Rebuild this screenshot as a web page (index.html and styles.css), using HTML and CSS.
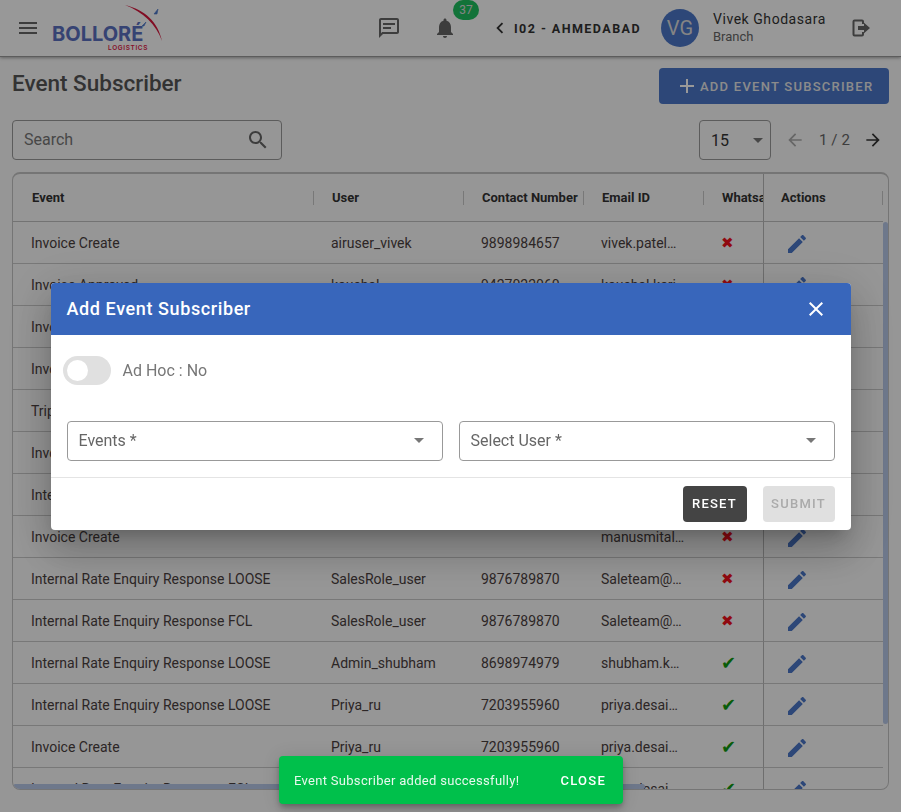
FILE: index.html
```html
<!DOCTYPE html>
<html lang="en">
<head>
	<title>Event Subscriber</title>
	<link rel="stylesheet" href="styles.css">
</head>
<body>

<header class="topbar">
	<svg class="icon menu-icon" viewBox="0 0 24 24"><path d="M3 18h18v-2H3v2zm0-5h18v-2H3v2zm0-7v2h18V6H3z"/></svg>
	<div class="logo">
		<span class="logo-name">BOLLORÉ</span>
		<span class="logo-sub">LOGISTICS</span>
		<svg class="logo-arc" width="60" height="50" viewBox="0 0 60 50">
			<path d="M15 5C35 10 48 22 52 41C46 24 33 12 15 5z" fill="#d8163c"/>
			<path d="M44 14L48 9L47 14z M32 26L36 22L34 26z" fill="#4b77c8" stroke="#4b77c8" stroke-width=".6"/>
		</svg>
	</div>
	<div class="topbar-right">
		<svg class="icon chat-icon" viewBox="0 0 24 24"><path d="M4 4h16v12H5.17L4 17.17V4m0-2c-1.1 0-1.99.9-1.99 2L2 22l4-4h14c1.1 0 2-.9 2-2V4c0-1.1-.9-2-2-2H4zm2 9h8v2H6v-2zm0-4h12v2H6V7z"/></svg>
		<div class="bell">
			<svg class="icon" viewBox="0 0 24 24"><path d="M12 22c1.1 0 2-.9 2-2h-4c0 1.1.89 2 2 2zm6-6v-5c0-3.07-1.64-5.64-4.5-6.32V4c0-.83-.67-1.5-1.5-1.5s-1.5.67-1.5 1.5v.68C7.63 5.36 6 7.92 6 11v5l-2 2v1h16v-1l-2-2z"/></svg>
			<span class="badge">37</span>
		</div>
		<div class="branch">
			<svg class="icon chevron" viewBox="0 0 24 24"><path d="M15.41 7.41L14 6l-6 6 6 6 1.41-1.41L10.83 12z"/></svg>
			<span>I02 - AHMEDABAD</span>
		</div>
		<div class="avatar">VG</div>
		<div class="who">
			<div class="who-name">Vivek Ghodasara</div>
			<div class="who-role">Branch</div>
		</div>
		<svg class="logout-icon" viewBox="0 0 20 20" width="20" height="20">
			<path d="M11 2.5H3.5a1 1 0 0 0-1 1v13a1 1 0 0 0 1 1H11a1 1 0 0 0 1-1v-2.5M12 6V3.5a1 1 0 0 0-1-1" fill="none" stroke="#666" stroke-width="2"/>
			<path d="M7 8h6V4.8l6 5.2-6 5.2V12H7z" fill="#666"/>
		</svg>
	</div>
</header>

<main class="content">
	<div class="title-row">
		<h1>Event Subscriber</h1>
		<button class="add-btn">
			<svg class="icon" viewBox="0 0 24 24"><path d="M19 13h-6v6h-2v-6H5v-2h6V5h2v6h6v2z"/></svg>
			ADD EVENT SUBSCRIBER
		</button>
	</div>

	<div class="tools-row">
		<div class="search">
			<span>Search</span>
			<svg class="icon" viewBox="0 0 24 24"><path d="M15.5 14h-.79l-.28-.27C15.41 12.59 16 11.11 16 9.5 16 5.91 13.09 3 9.5 3S3 5.91 3 9.5 5.91 16 9.5 16c1.61 0 3.09-.59 4.23-1.57l.27.28v.79l5 4.99L20.49 19l-4.99-5zm-6 0C7.01 14 5 11.99 5 9.5S7.01 5 9.5 5 14 7.01 14 9.5 11.99 14 9.5 14z"/></svg>
		</div>
		<div class="pager">
			<div class="page-size"><span>15</span><i class="caret"></i></div>
			<svg class="icon arrow off" viewBox="0 0 24 24"><path d="M20 11H7.83l5.59-5.59L12 4l-8 8 8 8 1.41-1.41L7.83 13H20v-2z"/></svg>
			<span class="page-num">1 / 2</span>
			<svg class="icon arrow" viewBox="0 0 24 24"><path d="M12 4l-1.41 1.41L16.17 11H4v2h12.17l-5.58 5.59L12 20l8-8z"/></svg>
		</div>
	</div>

	<div class="table-box">
		<table class="grid">
			<colgroup>
				<col class="c-event"><col class="c-user"><col class="c-num"><col class="c-mail"><col class="c-wa"><col class="c-act">
			</colgroup>
			<thead>
				<tr>
					<th><span>Event</span></th>
					<th><span>User</span></th>
					<th class="tight"><span>Contact Number</span></th>
					<th><span>Email ID</span></th>
					<th class="clip"><span>Whatsapp</span></th>
					<th class="act"><span>Actions</span></th>
				</tr>
			</thead>
			<tbody id="rows"></tbody>
		</table>
		<div class="thumb-v"></div>
		<div class="thumb-h"></div>
	</div>
</main>

<div class="overlay">
	<div class="modal">
		<div class="modal-head">
			<h2>Add Event Subscriber</h2>
			<svg class="icon" viewBox="0 0 24 24"><path d="M19 6.41L17.59 5 12 10.59 6.41 5 5 6.41 10.59 12 5 17.59 6.41 19 12 13.41 17.59 19 19 17.59 13.41 12z"/></svg>
		</div>
		<div class="modal-body">
			<div class="adhoc">
				<div class="toggle"><i></i></div>
				<span>Ad Hoc : No</span>
			</div>
			<div class="fields">
				<div class="field"><span>Events *</span><i class="caret"></i></div>
				<div class="field"><span>Select User *</span><i class="caret"></i></div>
			</div>
		</div>
		<div class="modal-foot">
			<button class="btn-reset">RESET</button>
			<button class="btn-submit">SUBMIT</button>
		</div>
	</div>
</div>

<div class="snack">
	<span>Event Subscriber added successfully!</span>
	<b>CLOSE</b>
</div>

<script>
var data = [
	["Invoice Create", "airuser_vivek", "9898984657", "vivek.patel@bollore.com", 0],
	["Invoice Approved", "kaushal", "9427022060", "kaushal.karia@bollore.com", 0],
	["Invoice Create", "kaushal", "9427022060", "kaushal.karia@bollore.com", 0],
	["Invoice Approved", "kaushal", "9427022060", "kaushal.karia@bollore.com", 0],
	["Trip Create", "kaushal", "9427022060", "kaushal.karia@bollore.com", 0],
	["Invoice Create", "kaushal", "9427022060", "kaushal.karia@bollore.com", 0],
	["Internal Rate Enquiry", "kaushal", "9427022060", "kaushal.karia@bollore.com", 0],
	["Invoice Create", "", "", "manusmital@bollore.com", 0],
	["Internal Rate Enquiry Response LOOSE", "SalesRole_user", "9876789870", "Saleteam@bollore.com", 0],
	["Internal Rate Enquiry Response FCL", "SalesRole_user", "9876789870", "Saleteam@bollore.com", 0],
	["Internal Rate Enquiry Response LOOSE", "Admin_shubham", "8698974979", "shubham.kumar@bollore.com", 1],
	["Internal Rate Enquiry Response LOOSE", "Priya_ru", "7203955960", "priya.desai@bollore.com", 1],
	["Invoice Create", "Priya_ru", "7203955960", "priya.desai@bollore.com", 1],
	["Internal Rate Enquiry Response FCL", "Priya_ru", "7203955960", "priya.desai@bollore.com", 1]
];

var pencil = '<svg class="icon edit" viewBox="0 0 24 24"><path d="M3 17.25V21h3.75L17.81 9.94l-3.75-3.75L3 17.25zM20.71 7.04c.39-.39.39-1.02 0-1.41l-2.34-2.34c-.39-.39-1.02-.39-1.41 0l-1.83 1.83 3.75 3.75 1.83-1.83z"/></svg>';

document.getElementById("rows").innerHTML = data.map(function(r) {
	var mark = r[4] ? '<span class="yes">✔</span>' : '<span class="no">✖</span>';
	return "<tr><td>" + r[0] + "</td><td>" + r[1] + "</td><td>" + r[2] + "</td><td>" + r[3] + "</td><td>" + mark + '</td><td class="act">' + pencil + "</td></tr>";
}).join("");
</script>

</body>
</html>
```

FILE: styles.css
```css
* {
	box-sizing: border-box;
}

html, body {
	margin: 0;
	height: 812px;
	overflow: hidden;
}

body {
	font-family: Roboto, sans-serif;
	background: #fafafa;
	color: #444;
}

.icon {
	width: 24px;
	height: 24px;
	fill: #666;
	flex: none;
}

/* top bar */
.topbar {
	height: 57px;
	display: flex;
	align-items: center;
	background: #fdfdfd;
	border-bottom: 1px solid #999;
	box-shadow: 0 1px 3px rgba(0,0,0,.35);
	padding-left: 16px;
}

.menu-icon {
	margin-right: 12px;
}

.logo {
	position: relative;
	width: 112px;
	height: 57px;
	display: flex;
	flex-direction: column;
	align-items: flex-start;
	padding-top: 23px;
}

.logo-name {
	font-family: Inter, sans-serif;
	font-weight: 700;
	font-size: 20px;
	line-height: 22px;
	color: #5a70c0;
	width: 96px;
}

.logo-sub {
	font-family: Inter, sans-serif;
	font-weight: 600;
	font-size: 6.5px;
	line-height: 7px;
	letter-spacing: .6px;
	color: #e01a45;
	width: 96px;
	text-align: right;
}

.logo-arc {
	position: absolute;
	left: 58px;
	top: 0;
}

.topbar-right {
	display: flex;
	align-items: center;
	margin-left: 213px;
}

.bell {
	position: relative;
	margin-left: 32px;
	height: 24px;
}

.badge {
	position: absolute;
	left: 20px;
	top: -16px;
	width: 26px;
	height: 20px;
	border-radius: 10px;
	background: #1fc060;
	color: #ddd;
	font-size: 12px;
	line-height: 20px;
	text-align: center;
}

.branch {
	display: flex;
	align-items: center;
	margin-left: 37px;
	font-size: 12.5px;
	font-weight: 700;
	letter-spacing: 1.45px;
	color: #333;
}

.chevron {
	width: 22px;
	height: 24px;
	fill: #333;
	margin-right: 3px;
	margin-left: -5px;
}

.avatar {
	width: 38px;
	height: 38px;
	border-radius: 50%;
	background: #4b77c8;
	color: #ddd;
	font-size: 20px;
	line-height: 38px;
	text-align: center;
	margin-left: 20px;
}

.who {
	margin-left: 14px;
	width: 139px;
}

.who-name {
	font-size: 14px;
	line-height: 18px;
	letter-spacing: .55px;
	color: #333;
}

.who-role {
	font-size: 13px;
	line-height: 18px;
	color: #666;
}

.logout-icon {
	margin-left: -1px;
}

/* page */
.content {
	padding: 11px 12px 0;
}

.title-row {
	display: flex;
	justify-content: space-between;
	align-items: flex-start;
}

h1 {
	margin: -1px 0 0;
	font-size: 22.5px;
	line-height: 32px;
	font-weight: 500;
	color: #555;
}

.add-btn {
	display: flex;
	align-items: center;
	width: 230px;
	height: 36px;
	padding: 0 0 0 16px;
	border: 0;
	border-radius: 4px;
	background: #4b77c8;
	font-family: Roboto, sans-serif;
	font-size: 13px;
	font-weight: 500;
	letter-spacing: 1.25px;
	color: #e8e8e8;
}

.add-btn .icon {
	fill: #fff;
	margin-right: 1px;
	width: 24px;
}

.tools-row {
	display: flex;
	justify-content: space-between;
	margin-top: 16px;
}

.search {
	display: flex;
	justify-content: space-between;
	align-items: center;
	width: 270px;
	height: 40px;
	padding: 0 11px;
	border: 1px solid #999;
	border-radius: 4px;
	font-size: 16px;
	color: #777;
}

.search span {
	margin-top: -2px;
}

.pager {
	display: flex;
	align-items: center;
	width: 190px;
}

.page-size {
	display: flex;
	justify-content: space-between;
	align-items: center;
	width: 72px;
	height: 40px;
	padding: 0 7px 0 11px;
	border: 1px solid #999;
	border-radius: 4px;
	font-size: 16px;
	color: #333;
}

.caret {
	width: 0;
	height: 0;
	border-left: 5px solid transparent;
	border-right: 5px solid transparent;
	border-top: 5px solid #777;
}

.arrow {
	width: 20px;
	height: 20px;
	fill: #333;
	margin-left: 14px;
}

.arrow.off {
	fill: #aaa;
}

.page-num {
	margin-left: 14px;
	font-size: 15px;
	letter-spacing: .1px;
	color: #666;
	width: 30px;
	white-space: nowrap;
}

/* table */
.table-box {
	position: relative;
	margin-top: 12px;
	height: 618px;
	width: 877px;
	overflow: hidden;
	border: 1px solid #c4c4c4;
	border-top: 2px solid #c4c4c4;
	border-radius: 8px;
}

.grid {
	table-layout: fixed;
	width: 870px;
	border-collapse: separate;
	border-spacing: 0;
	font-size: 14px;
}

.c-event { width: 300px; }
.c-user { width: 150px; }
.c-num { width: 120px; }
.c-mail { width: 120px; }
.c-wa { width: 60px; }
.c-act { width: 120px; }

.grid th {
	height: 48px;
	padding: 0 0 0 19px;
	text-align: left;
	font-size: 13px;
	font-weight: 700;
	color: #333;
	white-space: nowrap;
	border-bottom: 1px solid #c0c0c0;
	background-image: linear-gradient(#c8c8c8, #c8c8c8);
	background-repeat: no-repeat;
	background-size: 1px 14px;
	background-position: left center;
}

.grid th:first-child {
	background-image: none;
}

.grid th.clip {
	overflow: hidden;
}

.grid td {
	height: 42px;
	padding: 0 17px 0 18px;
	white-space: nowrap;
	overflow: hidden;
	text-overflow: ellipsis;
	border-bottom: 1px solid #c8c8c8;
	color: #4a4040;
}

.grid .act {
	border-left: 1px solid #b8b8b8;
}

.grid th.act {
	padding-left: 17px;
	background-position: right center;
}

.grid td.act {
	padding: 2px 0 0 21px;
	text-overflow: clip;
}

.edit {
	display: block;
	fill: #4b77c8;
}

.no {
	font-family: "DejaVu Sans", sans-serif;
	font-size: 15px;
	color: #f0101c;
}

.yes {
	font-family: "DejaVu Sans", sans-serif;
	font-size: 18px;
	color: #0f9a0f;
}

.thumb-v {
	position: absolute;
	left: 870px;
	top: 48px;
	width: 5px;
	height: 502px;
	background: #b8c8e8;
	border-radius: 3px;
}

.thumb-h {
	position: absolute;
	left: 0;
	bottom: 0;
	width: 632px;
	height: 5px;
	background: #b8c8e8;
	border-radius: 3px;
}

/* dialog */
.overlay {
	position: fixed;
	left: 0;
	top: 0;
	width: 901px;
	height: 812px;
	display: flex;
	justify-content: center;
	align-items: center;
	background: rgba(0,0,0,.4);
}

.modal {
	width: 800px;
	height: 247px;
	display: flex;
	flex-direction: column;
	background: #fff;
	border-radius: 4px;
	overflow: hidden;
	box-shadow: 0 11px 15px -7px rgba(0,0,0,.2), 0 24px 38px 3px rgba(0,0,0,.14), 0 9px 46px 8px rgba(0,0,0,.12);
}

.modal-head {
	height: 52px;
	display: flex;
	justify-content: space-between;
	align-items: center;
	padding: 0 23px 0 16px;
	background: #3866bb;
}

.modal-head h2 {
	margin: 0;
	font-size: 18px;
	font-weight: 500;
	letter-spacing: .6px;
	color: #fff;
}

.modal-head .icon {
	fill: #fff;
}

.modal-body {
	flex: 1;
	padding: 21px 16px 0;
	border-bottom: 1px solid #e4e4e4;
}

.adhoc {
	display: flex;
	align-items: center;
	margin-left: -4px;
	font-size: 16px;
	color: #777;
}

.toggle {
	position: relative;
	width: 48px;
	height: 29px;
	margin-right: 12px;
	border-radius: 15px;
	background: #e0e0e0;
}

.toggle i {
	position: absolute;
	left: 4px;
	top: 4px;
	width: 21px;
	height: 21px;
	border-radius: 50%;
	background: #fff;
}

.fields {
	display: flex;
	gap: 16px;
	margin-top: 36px;
}

.field {
	flex: 1;
	display: flex;
	justify-content: space-between;
	align-items: center;
	height: 40px;
	padding: 0 18px 0 11px;
	border: 1px solid #999;
	border-radius: 4px;
	font-size: 16px;
	color: #666;
}

.modal-foot {
	height: 52px;
	display: flex;
	justify-content: flex-end;
	align-items: center;
	gap: 16px;
	padding: 0 16px 0 0;
}

.modal-foot button {
	height: 36px;
	border: 0;
	border-radius: 4px;
	font-family: Roboto, sans-serif;
	font-size: 13px;
	font-weight: 500;
	letter-spacing: 1.25px;
}

.btn-reset {
	width: 64px;
	background: #444;
	color: #fff;
}

.btn-submit {
	width: 72px;
	background: #e0e0e0;
	color: #aaa;
}

/* snackbar */
.snack {
	position: fixed;
	left: 279px;
	bottom: 8px;
	width: 344px;
	height: 48px;
	display: flex;
	justify-content: space-between;
	align-items: center;
	padding: 0 17px 0 15px;
	border-radius: 4px;
	background: #00c04b;
	font-size: 13px;
	letter-spacing: .3px;
	color: #e8f8ee;
	box-shadow: 0 3px 5px -1px rgba(0,0,0,.2), 0 6px 10px 0 rgba(0,0,0,.14), 0 1px 18px 0 rgba(0,0,0,.12);
}

.snack b {
	font-weight: 500;
	letter-spacing: 1.25px;
	color: #fff;
}
```
